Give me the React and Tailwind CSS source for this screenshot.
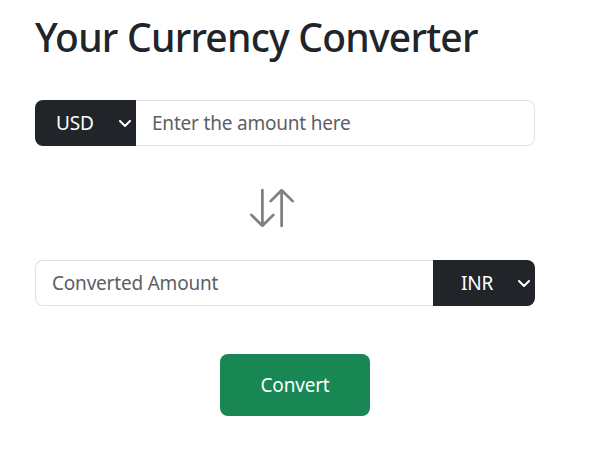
export default function App() {
  const Chevron = () => (
    <svg width="12" height="7" viewBox="0 0 12 7" fill="none" className="shrink-0">
      <path d="M1 1l5 5 5-5" stroke="#ffffff" strokeWidth="2" strokeLinecap="round" strokeLinejoin="round" />
    </svg>
  );
  return (
    <div className="w-[589px] h-[449px] bg-white text-[#212529]" style={{ fontFamily: '"Noto Sans", "Open Sans", sans-serif' }}>
      <div className="pl-[35px] pt-[13px] w-[535px] flex flex-col">
        <h1 className="text-[39px] leading-[48px] font-medium tracking-[-0.76px] text-[#212529] whitespace-nowrap">Your Currency Converter</h1>
        <div className="mt-[39px] flex h-[46px] w-[500px]">
          <div className="w-[101px] h-full bg-[#212529] rounded-l-[8px] flex items-center pl-[21px] pr-[5px] justify-between text-white text-[19px] tracking-[-0.2px]">
            <span>USD</span>
            <Chevron />
          </div>
          <div className="flex-1 h-full border border-[#dee2e6] border-l-0 rounded-r-[8px] flex items-center pl-[16px] text-[19px] tracking-[-0.2px] text-[#5c6063]">
            Enter the amount here
          </div>
        </div>
        <div className="h-[114px] pt-[40px] flex items-start">
          <svg width="44" height="44" viewBox="0 0 16 16" fill="#808080" className="ml-[215px]">
            <path fillRule="evenodd" d="M11.5 15a.5.5 0 0 0 .5-.5V2.707l3.146 3.147a.5.5 0 0 0 .708-.708l-4-4a.5.5 0 0 0-.708 0l-4 4a.5.5 0 1 0 .708.708L11 2.707V14.5a.5.5 0 0 0 .5.5m-7-14a.5.5 0 0 1 .5.5v11.793l3.146-3.147a.5.5 0 0 1 .708.708l-4 4a.5.5 0 0 1-.708 0l-4-4a.5.5 0 0 1 .708-.708L4 13.293V1.5a.5.5 0 0 1 .5-.5" />
          </svg>
        </div>
        <div className="flex h-[46px] w-[500px]">
          <div className="flex-1 h-full border border-[#dee2e6] border-r-0 rounded-l-[8px] flex items-center pl-[16px] text-[19px] tracking-[-0.2px] text-[#5c6063]">
            Converted Amount
          </div>
          <div className="w-[102px] h-full bg-[#212529] rounded-r-[8px] flex items-center pl-[28px] pr-[5px] justify-between text-white text-[19px] tracking-[-0.2px]">
            <span>INR</span>
            <Chevron />
          </div>
        </div>
        <div className="mt-[48px] flex">
          <button className="ml-[185px] w-[150px] h-[62px] bg-[#198754] rounded-[8px] text-white text-[19px] tracking-[-0.2px] flex items-center justify-center">
            Convert
          </button>
        </div>
      </div>
    </div>
  );
}
